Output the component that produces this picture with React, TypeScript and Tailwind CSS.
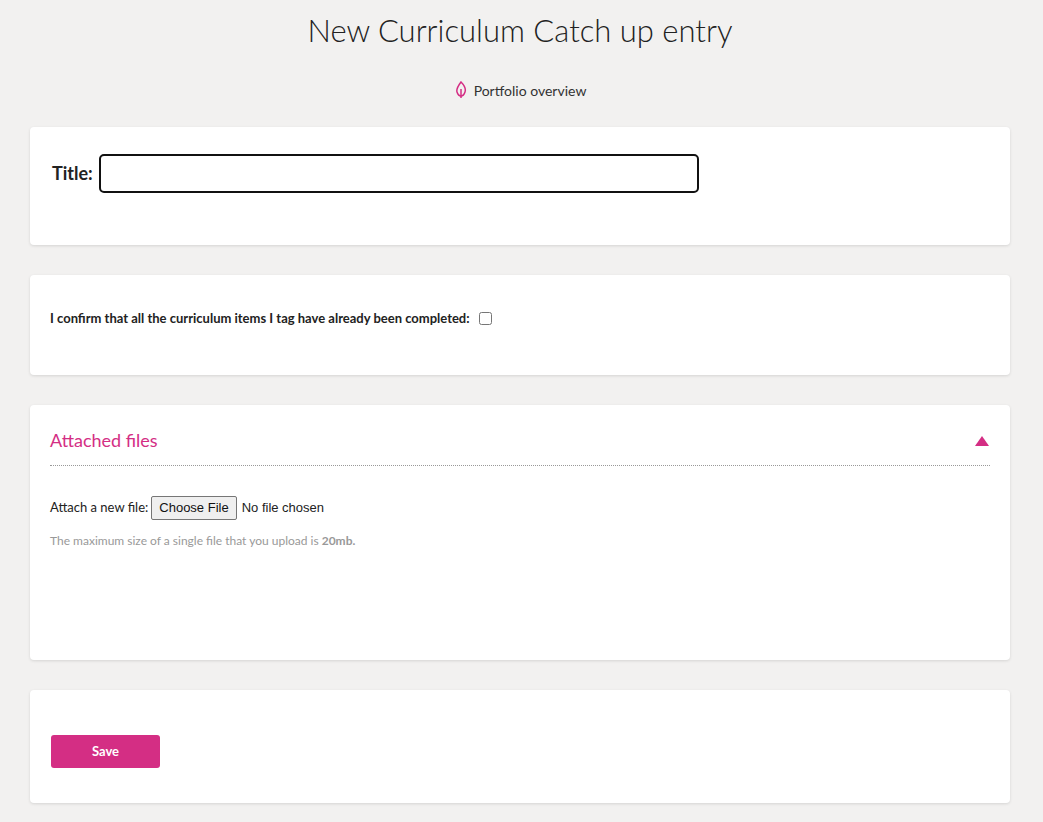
import React from 'react';

const App: React.FC = () => {
    return (
        <div className="min-h-screen bg-[#f2f1f0] font-[Lato] text-[#333] pl-[30px] pr-[33px] pb-5">
            <h1 className="text-center text-[31px] font-light text-[#222] pt-[10px] leading-[40px]">New Curriculum Catch up entry</h1>

            <div className="flex justify-center items-center gap-[6px] mt-[30px] h-[20px] text-[14px] text-[#333]">
                <svg width="14" height="18" viewBox="0 0 14 18" fill="none" stroke="#d42e84" strokeWidth="1.5">
                    <path d="M7 1 C11 5 12 8 11 11 C10 14 8 15 7 15 C6 15 4 14 3 11 C2 8 4 5 7 1 Z" />
                    <path d="M7 8 L7 17" />
                </svg>
                <span>Portfolio overview</span>
            </div>

            <div className="mt-[27px] flex flex-col gap-[30px]">
                <div className="bg-white rounded shadow-[0_1px_3px_rgba(0,0,0,0.12)] h-[118px] px-[22px] pt-[27px]">
                    <div className="flex items-center gap-[6px]">
                        <label className="text-[18px] font-bold text-[#222]">Title:</label>
                        <input className="w-[600px] h-[39px] border-2 border-[#111] rounded-[5px] px-2" />
                    </div>
                </div>

                <div className="bg-white rounded shadow-[0_1px_3px_rgba(0,0,0,0.12)] h-[100px] px-[20px] pt-[34px]">
                    <div className="flex items-center gap-[9px] text-[13px] font-bold text-[#222]">
                        <span>I confirm that all the curriculum items I tag have already been completed:</span>
                        <input type="checkbox" className="w-[13px] h-[13px]" />
                    </div>
                </div>

                <div className="bg-white rounded shadow-[0_1px_3px_rgba(0,0,0,0.12)] h-[255px] px-[20px] pt-[22px]">
                    <div className="flex items-center justify-between border-b border-dotted border-[#999] pb-[11px]">
                        <span className="text-[18px] text-[#d42e84]">Attached files</span>
                        <svg width="14" height="10" viewBox="0 0 14 10" className="mr-[1px]"><path d="M7 0 L14 10 L0 10 Z" fill="#d42e84" /></svg>
                    </div>
                    <div className="flex items-center gap-[3px] mt-[30px] text-[13px] text-[#222]">
                        <span>Attach a new file:</span>
                        <input type="file" className="text-[13px] font-[Arial] file:bg-[#efefef] file:border file:border-[#767676] file:rounded-[2px] file:px-[7px] file:py-[1px] file:mr-[5px] file:text-[#111]" />
                    </div>
                    <p className="text-[12px] text-[#999] mt-[12px]">The maximum size of a single file that you upload is <b>20mb.</b></p>
                </div>

                <div className="bg-white rounded shadow-[0_1px_3px_rgba(0,0,0,0.12)] h-[113px] px-[21px] pt-[45px]">
                    <button className="w-[109px] h-[33px] bg-[#d42e84] rounded-[3px] text-white text-[13px] font-bold">Save</button>
                </div>
            </div>
        </div>
    );
};

export default App;
